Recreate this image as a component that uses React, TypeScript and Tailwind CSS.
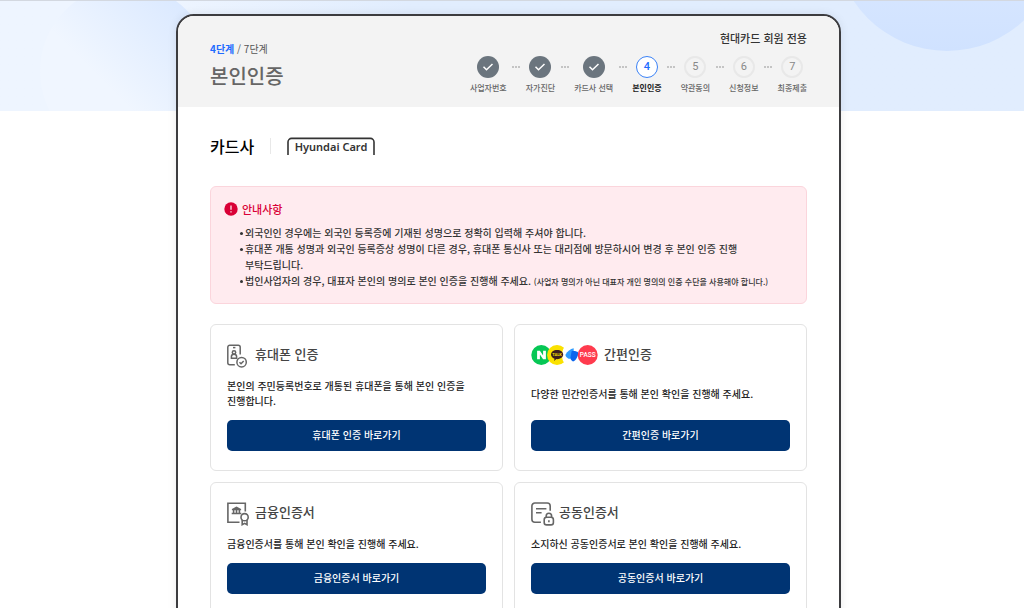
import React from "react";
import type { ReactNode } from "react";

const steps = ["사업자번호", "자가진단", "카드사 선택", "본인인증", "약관동의", "신청정보", "최종제출"];
const currentStep = 4;

function PhoneIcon() {
  return (
    <svg width="24" height="24" viewBox="0 0 24 24" fill="none" stroke="#666" strokeWidth="1.5" aria-hidden="true">
      <path d="M13.2 10.5V3.2a2 2 0 0 0-2-2H2.8a2 2 0 0 0-2 2v15.6a2 2 0 0 0 2 2h5" />
      <path d="M6 3.6h2.4" />
      <circle cx="7" cy="8.4" r="1.7" />
      <path d="M4.4 14.2v-1.6c0-1.4 1-2.3 2.6-2.3s2.6.9 2.6 2.3v1.6z" />
      <circle cx="14.6" cy="18.2" r="4.7" />
      <path d="m12.5 18.3 1.5 1.4 2.7-2.8" />
    </svg>
  );
}

function BankIcon() {
  return (
    <svg width="24" height="24" viewBox="0 0 24 24" fill="none" stroke="#666" strokeWidth="1.6" aria-hidden="true">
      <path d="M18.3 9.5V1.2H.9v19h11.6" />
      <path d="m9.5 4.4 4.6 2.5v1.3H4.9V6.9z" fill="#666" stroke="none" />
      <path d="M6.6 8v3.2M9.5 8v3.2M12.4 8v3.2M4.7 11.5h9.6" />
      <circle cx="17.6" cy="15.2" r="3.6" />
      <path d="M15.2 18v4.7l2.4-1.3 2.4 1.3V18" />
    </svg>
  );
}

function CertIcon() {
  return (
    <svg width="24" height="24" viewBox="0 0 24 24" fill="none" stroke="#666" strokeWidth="1.6" aria-hidden="true">
      <path d="M19.2 8.8V4a3 3 0 0 0-3-3H3.9a3 3 0 0 0-3 3v13.2a3 3 0 0 0 3 3h6" />
      <path d="M5 6.8h10.4M5 10.8h5.6" />
      <rect x="13.2" y="15.3" width="9.2" height="7.6" rx="2.4" />
      <path d="M15.2 15.2V14a2.7 2.7 0 0 1 5.4 0v1.2" />
      <path d="M17.9 18.2v2" />
    </svg>
  );
}

function SimpleAuthLogos() {
  return (
    <svg width="69" height="24" viewBox="0 0 69 24" aria-hidden="true">
      <circle cx="10.3" cy="11" r="10" fill="#06c755" />
      <path d="M33 18.2a10 10 0 1 1 0-14.4c-2 1.7-2.8 12.6 0 14.4z" fill="#fae100" />
      <path d="M6.1 15.3V6.8h2.8l3.2 4.7V6.8h2.8v8.5h-2.8l-3.2-4.7v4.7z" fill="#fff" />
      <path
        d="M26.1 6c3.5 0 6.1 2 6.1 4.6s-2.6 4.6-6.1 4.6l-.7-.1-2.3 1.8.4-2.2c-2.1-.8-3.5-2.3-3.5-4.1C20 8 22.6 6 26.1 6z"
        fill="#3b1e1e"
      />
      <text x="26.1" y="12.2" fontSize="4" fontWeight="700" textAnchor="middle" fill="#fae100" fontFamily="Roboto, sans-serif">
        TALK
      </text>
      <path d="M34.6 10.4c1.7-3 4.8-5.4 8.1-6.1v7.2l-3.3 3.2c-2.5.5-5.6-2.7-4.8-4.3z" fill="#2d9bff" />
      <path d="M40.6 7.2c2.6-.6 5.400 0 6.600 1.200 0 4.100-2.100 7.600-5.200 9.200-1.500-.7-2.500-2-2.600-3.500z" fill="#0a66ee" />
      <circle cx="56.7" cy="11" r="10" fill="#ff3b4e" />
      <text x="56.7" y="13.4" fontSize="6.5" fontWeight="500" textAnchor="middle" fill="#fff" fontFamily="Roboto, sans-serif">
        PASS
      </text>
    </svg>
  );
}

function HyundaiCardLogo() {
  return (
    <svg width="88" height="20" viewBox="0 0 88 20" role="img" aria-label="Hyundai Card">
      <path d="M1 19V6a3.6 3.6 0 0 1 3.6-3.6h78.8A3.6 3.6 0 0 1 87 6v13" fill="none" stroke="#333" strokeWidth="1.6" />
      <text x="44" y="15" fontSize="11" fontWeight="600" textAnchor="middle" fill="#333" fontFamily="'Noto Sans', sans-serif">
        Hyundai Card
      </text>
    </svg>
  );
}

function StepList() {
  return (
    <ol className="flex">
      {steps.map((label, index) => {
        const number = index + 1;
        const done = number < currentStep;
        const active = number === currentStep;
        let circle = "border-2 border-[#e8e8e8] text-[#888]";
        if (done) circle = "bg-[#6b757e] text-white";
        if (active) circle = "border border-[#3b82f6] bg-white font-medium text-[#1f6bff]";
        return (
          <li key={label} className="flex" aria-current={active ? "step" : undefined}>
            {index > 0 && (
              <span className="flex h-[22px] w-[19px] items-center justify-center gap-px" aria-hidden="true">
                <i className="size-[2px] rounded-full bg-[#b5b5b5]" />
                <i className="size-[2px] rounded-full bg-[#b5b5b5]" />
                <i className="size-[2px] rounded-full bg-[#b5b5b5]" />
              </span>
            )}
            <div className="flex flex-col items-center">
              <span
                className={`flex size-[22px] items-center justify-center rounded-full font-[Roboto,sans-serif] text-[11px] ${circle}`}
              >
                {done ? (
                  <svg width="12" height="10" viewBox="0 0 12 10" fill="none" stroke="currentColor" strokeWidth="1.5">
                    <path d="m1.5 4.8 3 3 6-5.8" />
                  </svg>
                ) : (
                  number
                )}
              </span>
              <span
                className={`mt-1 text-[8px] leading-3 whitespace-nowrap ${active ? "font-bold text-[#222]" : "font-medium text-[#666]"}`}
              >
                {label}
              </span>
            </div>
          </li>
        );
      })}
    </ol>
  );
}

type AuthCardProps = {
  icon: ReactNode;
  title: string;
  description: string;
};

function AuthCard({ icon, title, description }: AuthCardProps) {
  return (
    <section className="flex flex-col rounded-md border border-[#e3e3e3] px-4 py-[19px]">
      <div className="flex h-6 items-start gap-1">
        {icon}
        <h3 className="text-[13px] leading-5 font-medium text-[#444]">{title}</h3>
      </div>
      <p className="my-auto pt-2.5 pb-3 text-[10px] leading-[15px] font-medium text-[#222]">{description}</p>
      <button
        type="button"
        className="h-[31px] w-full rounded-[5px] bg-[#003473] pb-0.5 text-[10px] font-medium text-white"
      >
        {title} 바로가기
      </button>
    </section>
  );
}

export default function App() {
  return (
    <div
      lang="ko"
      className="relative min-h-screen overflow-hidden bg-white pt-3.5 pr-[7px] font-['Noto_Sans_CJK_KR',sans-serif] break-keep"
    >
      <div
        className="absolute inset-x-0 top-0 h-[111px] overflow-hidden border-t border-[#d3d8e0] bg-linear-to-r from-[#eef5ff] from-15% to-[#e1edfe] to-40%"
        aria-hidden="true"
      >
        <div className="absolute -top-4 left-10 size-[172px] rounded-full bg-linear-to-bl from-[#d9e8ff] from-10% to-[#f0f6ff] to-60%" />
        <div className="absolute -top-[174px] right-[-35px] size-[224px] rounded-full bg-linear-to-t from-[#d0e2ff] to-[#e6f0ff]" />
      </div>

      <main className="relative mx-auto max-w-[665px] overflow-hidden rounded-[18px] border-2 border-[#3c3c3f] bg-white shadow-[0_0_10px_rgba(0,0,0,0.08)]">
        <header className="flex justify-between bg-[#f3f3f3] px-8 pt-3.5 pb-[13px]">
          <div className="pt-[11px]">
            <p className="text-[10px] leading-4 text-[#555]">
              <span className="font-bold text-[#1f6bff]">4단계</span> / 7단계
            </p>
            <h1 className="mt-[5px] text-xl leading-7 font-medium text-[#666]">본인인증</h1>
          </div>
          <div className="flex flex-col items-end">
            <p className="mb-2.5 text-[11px] leading-4 font-medium text-[#333]">현대카드 회원 전용</p>
            <StepList />
          </div>
        </header>

        <div className="px-8 pt-7 pb-8">
          <div className="flex h-[22px] items-center">
            <h2 className="text-base leading-[22px] font-medium text-black">카드사</h2>
            <span className="mx-4 h-4 w-px bg-[#e8e8e8]" aria-hidden="true" />
            <HyundaiCardLogo />
          </div>

          <section className="mt-[29px] rounded-md border border-[#fbd5dc] bg-[#ffebef] px-[13px] py-3.5">
            <h2 className="flex items-center gap-1 text-[11px] leading-4 font-medium text-[#d90036]">
              <svg width="14" height="14" viewBox="0 0 14 14" aria-hidden="true">
                <circle cx="7" cy="7" r="6.7" fill="#d90036" />
                <path d="M7 3.6v4.2M7 9.2v1.3" stroke="#fff" strokeWidth="1.2" />
              </svg>
              안내사항
            </h2>
            <ul className="mt-2 pl-[21px] text-[10px] leading-4 font-medium text-[#333]">
              {[
                "외국인인 경우에는 외국인 등록증에 기재된 성명으로 정확히 입력해 주셔야 합니다.",
                "휴대폰 개통 성명과 외국인 등록증상 성명이 다른 경우, 휴대폰 통신사 또는 대리점에 방문하시어 변경 후 본인 인증 진행 부탁드립니다.",
              ].map((text) => (
                <li key={text} className="relative before:absolute before:top-[7px] before:-left-[5px] before:size-[3px] before:rounded-full before:bg-[#333]">
                  {text}
                </li>
              ))}
              <li className="relative before:absolute before:top-[7px] before:-left-[5px] before:size-[3px] before:rounded-full before:bg-[#333]">
                법인사업자의 경우, 대표자 본인의 명의로 본인 인증을 진행해 주세요.{" "}
                <small className="text-[8px] leading-none">
                  (사업자 명의가 아닌 대표자 개인 명의의 인증 수단을 사용해야 합니다.)
                </small>
              </li>
            </ul>
          </section>

          <div className="mt-5 grid grid-cols-2 gap-[11px]">
            <AuthCard
              icon={<PhoneIcon />}
              title="휴대폰 인증"
              description="본인의 주민등록번호로 개통된 휴대폰을 통해 본인 인증을 진행합니다."
            />
            <AuthCard
              icon={<SimpleAuthLogos />}
              title="간편인증"
              description="다양한 민간인증서를 통해 본인 확인을 진행해 주세요."
            />
            <AuthCard
              icon={<BankIcon />}
              title="금융인증서"
              description="금융인증서를 통해 본인 확인을 진행해 주세요."
            />
            <AuthCard
              icon={<CertIcon />}
              title="공동인증서"
              description="소지하신 공동인증서로 본인 확인을 진행해 주세요."
            />
          </div>
        </div>
      </main>
    </div>
  );
}
